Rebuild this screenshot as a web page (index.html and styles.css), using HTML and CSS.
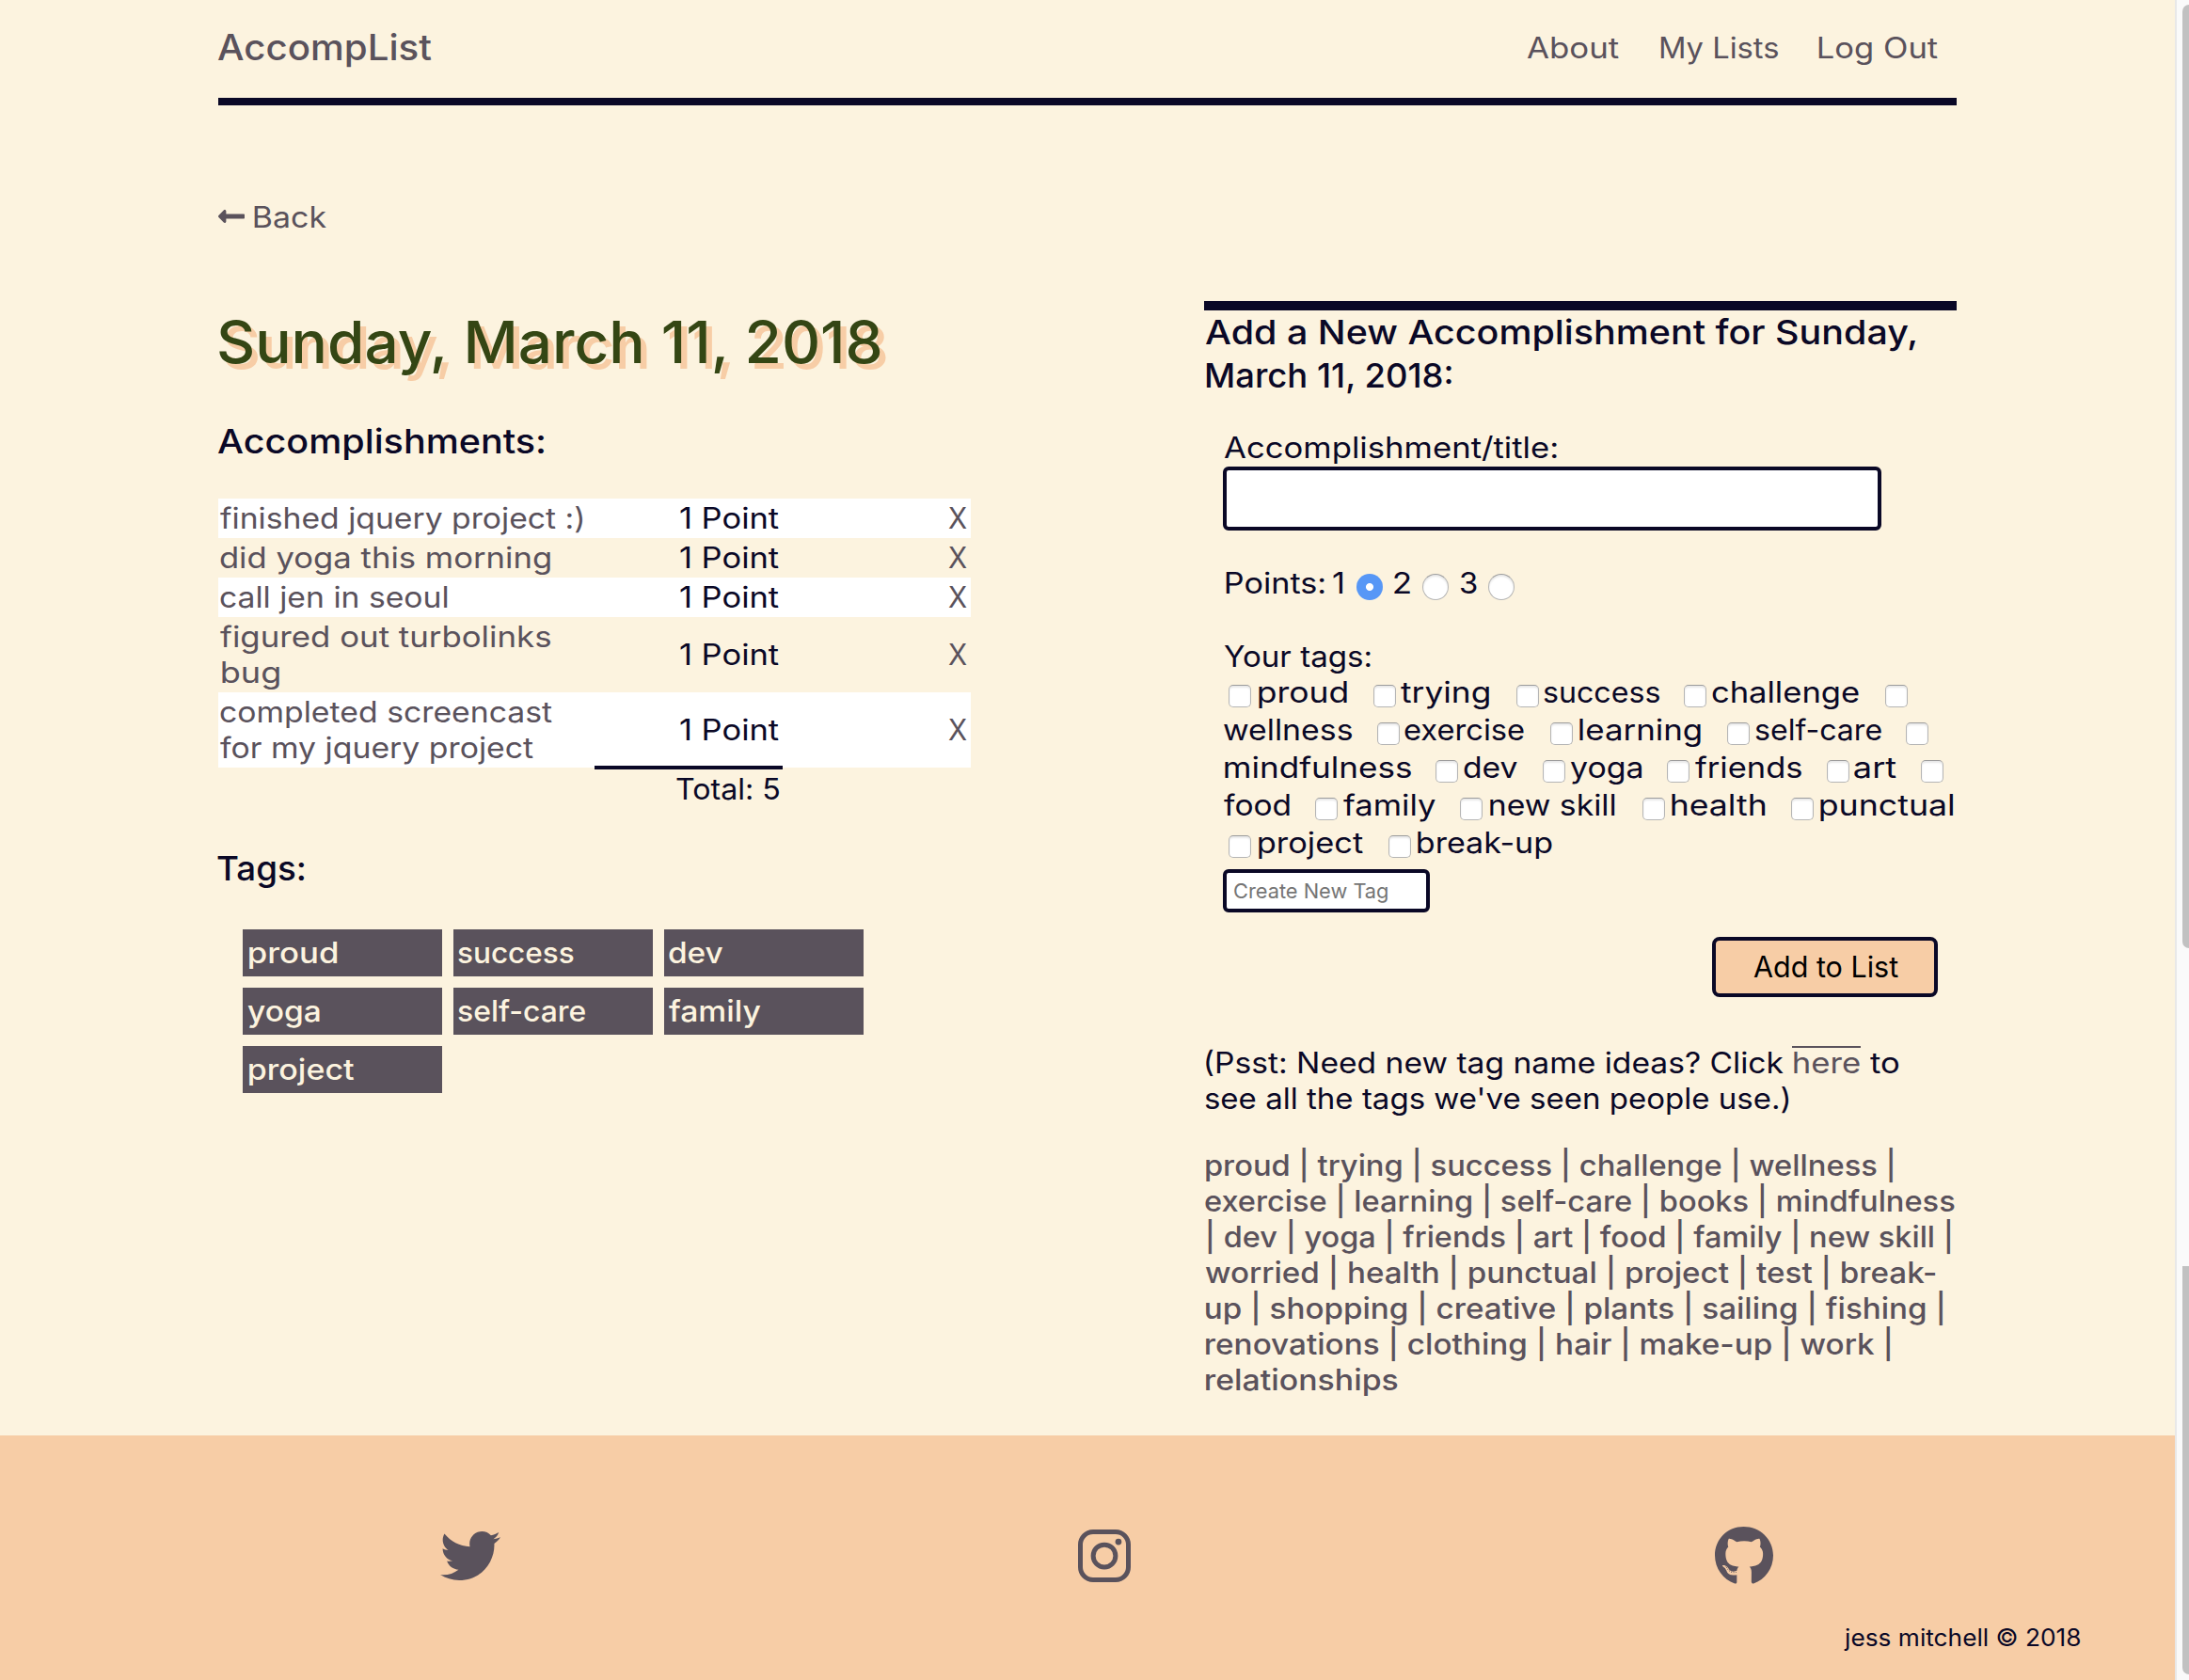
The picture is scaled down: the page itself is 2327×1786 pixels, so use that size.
FILE: index.html
```html
<!DOCTYPE html>
<html lang="en">
<head>
<meta charset="utf-8">
<title>AccompList</title>
<link rel="stylesheet" href="styles.css">
</head>
<body>
<div class="page">
  <div class="content">
    <header class="header">
      <a class="brand" data-x="-1" data-w="228">AccompList</a>
      <nav class="nav">
        <a data-w="98">About</a>
        <a data-x="1" data-w="125">My Lists</a>
        <a data-x="1" data-w="127">Log Out</a>
      </nav>
    </header>
    <a class="back">
      <svg class="back-icon" viewBox="0 0 448 512"><path d="M134.059 296H436c6.627 0 12-5.373 12-12v-56c0-6.627-5.373-12-12-12H134.059v-46.059c0-21.382-25.851-32.09-40.971-16.971L7.029 239.029c-9.373 9.373-9.373 24.569 0 33.941l86.059 86.059c15.119 15.119 40.971 4.411 40.971-16.971V296z"/></svg>
      <span data-x="10" data-w="77">Back</span>
    </a>
    <main class="columns">
      <section class="day">
        <h1 data-x="1" data-w="704">Sunday, March 11, 2018</h1>
        <h2 class="list-title" data-x="-1" data-w="348">Accomplishments:</h2>
        <div class="list">
          <div class="row"><a><span data-x="2" data-w="385">finished jquery project :)</span></a><span data-x="91" data-w="105">1 Point</span><a data-x="176" data-w="20">X</a></div>
          <div class="row"><a><span data-x="2" data-w="351">did yoga this morning</span></a><span data-x="91" data-w="105">1 Point</span><a data-x="176" data-w="20">X</a></div>
          <div class="row"><a><span data-x="2" data-w="242">call jen in seoul</span></a><span data-x="91" data-w="105">1 Point</span><a data-x="176" data-w="20">X</a></div>
          <div class="row"><a><span data-x="2" data-w="351">figured out turbolinks</span><span data-x="4" data-w="61">bug</span></a><span data-x="91" data-w="105">1 Point</span><a data-x="176" data-w="20">X</a></div>
          <div class="row"><a><span data-x="2" data-w="353">completed screencast</span><span data-x="2" data-w="333">for my jquery project</span></a><span data-x="91" data-w="105">1 Point</span><a data-x="176" data-w="20">X</a></div>
        </div>
        <div class="total"><span data-x="87" data-w="109">Total: 5</span></div>
        <h2 class="tags-title" data-x="-1" data-w="93">Tags:</h2>
        <div class="chips">
          <a><span data-x="7" data-w="93">proud</span></a>
          <a><span data-x="5" data-w="123">success</span></a>
          <a><span data-x="5" data-w="58">dev</span></a>
          <a><span data-x="5" data-w="77">yoga</span></a>
          <a><span data-x="5" data-w="135">self-care</span></a>
          <a><span data-x="5" data-w="98">family</span></a>
          <a><span data-x="7" data-w="111">project</span></a>
        </div>
      </section>
      <section class="add">
        <h2><span data-x="1" data-w="755">Add a New Accomplishment for Sunday,</span><span data-x="2" data-w="262">March 11, 2018:</span></h2>
        <form class="form">
          <label class="title-label" data-x="1" data-w="354">Accomplishment/title:</label>
          <input class="title-input" type="text">
          <div class="points">
            <span class="points-label" data-x="3" data-w="105">Points:</span>
            <span class="num" data-x="3" data-w="10">1</span><input type="radio" name="points" checked>
            <span class="num" data-x="0" data-w="17">2</span><input type="radio" name="points">
            <span class="num" data-x="0" data-w="18">3</span><input type="radio" name="points">
          </div>
          <div class="your-tags" data-x="1" data-w="156">Your tags:</div>
          <div class="tag-row"><label style="width:154px"><input type="checkbox"><b data-x="8" data-w="94">proud</b></label><label style="width:152px"><input type="checkbox"><b data-x="5" data-w="94">trying</b></label><label style="width:178px"><input type="checkbox"><b data-x="5" data-w="123">success</b></label><label style="width:214px"><input type="checkbox"><b data-x="6" data-w="156">challenge</b></label><input type="checkbox"></div>
          <div class="tag-row"><label class="wrapped" style="width:164px"><b data-x="1" data-w="136">wellness</b></label><label style="width:184px"><input type="checkbox"><b data-x="5" data-w="127">exercise</b></label><label style="width:188px"><input type="checkbox"><b data-x="7" data-w="129">learning</b></label><label style="width:190px"><input type="checkbox"><b data-x="6" data-w="134">self-care</b></label><input type="checkbox"></div>
          <div class="tag-row"><label class="wrapped" style="width:226px"><b data-x="2" data-w="198">mindfulness</b></label><label style="width:114px"><input type="checkbox"><b data-x="6" data-w="57">dev</b></label><label style="width:132px"><input type="checkbox"><b data-x="5" data-w="77">yoga</b></label><label style="width:170px"><input type="checkbox"><b data-x="6" data-w="113">friends</b></label><label style="width:100px"><input type="checkbox"><b data-x="5" data-w="45">art</b></label><input type="checkbox"></div>
          <div class="tag-row"><label class="wrapped" style="width:98px"><b data-x="1" data-w="70">food</b></label><label style="width:154px"><input type="checkbox"><b data-x="6" data-w="98">family</b></label><label style="width:194px"><input type="checkbox"><b data-x="8" data-w="133">new skill</b></label><label style="width:158px"><input type="checkbox"><b data-x="7" data-w="99">health</b></label><label><input type="checkbox"><b data-x="7" data-w="142">punctual</b></label></div>
          <div class="tag-row"><label style="width:170px"><input type="checkbox"><b data-x="8" data-w="111">project</b></label><label><input type="checkbox"><b data-x="7" data-w="143">break-up</b></label></div>
          <input class="new-tag" type="text" placeholder="Create New Tag">
          <button class="submit" type="button"><span data-x="40" data-w="154">Add to List</span></button>
        </form>
        <div class="hint">
          <p><span class="ask"><span data-x="2" data-w="614">(Psst: Need new tag name ideas? Click</span></span><a class="here"><span data-x="2" data-w="70">here</span></a><span data-x="0" data-w="30">to</span></p>
          <p><span data-x="1" data-w="620">see all the tags we've seen people use.)</span></p>
        </div>
        <div class="all-tags">
          <span data-x="2" data-w="730">proud | trying | success | challenge | wellness |</span>
          <span data-x="1" data-w="797">exercise | learning | self-care | books | mindfulness</span>
          <span data-x="4" data-w="789">| dev | yoga | friends | art | food | family | new skill |</span>
          <span data-x="1" data-w="777">worried | health | punctual | project | test | break-</span>
          <span data-x="2" data-w="783">up | shopping | creative | plants | sailing | fishing |</span>
          <span data-x="2" data-w="727">renovations | clothing | hair | make-up | work |</span>
          <span data-x="2" data-w="204">relationships</span>
        </div>
      </section>
    </main>
  </div>
  <footer class="footer">
    <div class="social">
      <svg width="64" height="64" viewBox="0 0 512 512"><path d="M459.37 151.716c.325 4.548.325 9.097.325 13.645 0 138.72-105.583 298.558-298.558 298.558-59.452 0-114.68-17.219-161.137-47.106 8.447.974 16.568 1.299 25.34 1.299 49.055 0 94.213-16.568 130.274-44.832-46.132-.975-84.792-31.188-98.112-72.772 6.498.974 12.995 1.624 19.818 1.624 9.421 0 18.843-1.3 27.614-3.573-48.081-9.747-84.143-51.98-84.143-102.985v-1.299c13.969 7.797 30.214 12.67 47.431 13.319-28.264-18.843-46.781-51.005-46.781-87.391 0-19.492 5.197-37.36 14.294-52.954 51.655 63.675 129.3 105.258 216.365 109.807-1.624-7.797-2.599-15.918-2.599-24.04 0-57.828 46.782-104.934 104.934-104.934 30.213 0 57.502 12.67 76.67 33.137 23.715-4.548 46.456-13.32 66.599-25.34-7.798 24.366-24.366 44.833-46.132 57.827 21.117-2.273 41.584-8.122 60.426-16.243-14.292 20.791-32.161 39.308-52.628 54.253z"/></svg>
      <svg width="56" height="64" viewBox="0 0 448 512"><rect class="line" x="20" y="52" width="408" height="408" rx="108"/><circle class="line" cx="224" cy="256" r="95"/><circle cx="343.600" cy="136.400" r="27"/></svg>
      <svg width="62" height="64" viewBox="0 0 496 512"><path d="M165.9 397.4c0 2-2.3 3.6-5.2 3.6-3.3.3-5.6-1.3-5.6-3.6 0-2 2.3-3.6 5.2-3.6 3-.3 5.6 1.3 5.6 3.6zm-31.1-4.5c-.7 2 1.3 4.3 4.3 4.9 2.6 1 5.6 0 6.2-2s-1.3-4.3-4.3-5.2c-2.6-.7-5.5.3-6.2 2.3zm44.2-1.7c-2.900.7-4.900 2.600-4.600 4.900.3 2 2.900 3.300 5.900 2.600 2.900-.7 4.900-2.600 4.600-4.600-.3-1.900-3-3.200-5.900-2.900zM244.800 8C106.100 8 0 113.300 0 252c0 110.900 69.800 205.800 169.500 239.200 12.800 2.300 17.300-5.600 17.300-12.100 0-6.200-.3-40.400-.3-61.400 0 0-70 15-84.700-29.800 0 0-11.400-29.100-27.800-36.600 0 0-22.900-15.700 1.600-15.400 0 0 24.900 2 38.600 25.800 21.900 38.600 58.600 27.500 72.900 20.900 2.300-16 8.800-27.100 16-33.700-55.900-6.200-112.300-14.300-112.300-110.500 0-27.500 7.600-41.300 23.600-58.900-2.600-6.500-11.100-33.300 2.600-67.900 20.900-6.500 69 27 69 27 20-5.600 41.500-8.500 62.800-8.500s42.800 2.900 62.800 8.500c0 0 48.100-33.600 69-27 13.700 34.700 5.200 61.400 2.600 67.900 16 17.700 25.800 31.500 25.800 58.900 0 96.500-58.900 104.200-114.800 110.500 9.200 7.900 17 22.900 17 46.400 0 33.700-.3 75.400-.3 83.600 0 6.500 4.600 14.400 17.300 12.100C428.200 457.800 496 362.900 496 252 496 113.300 383.500 8 244.800 8zM97.200 352.900c-1.300 1-1 3.300.7 5.200 1.600 1.600 3.900 2.300 5.200 1 1.300-1 1-3.300-.7-5.200-1.600-1.600-3.900-2.300-5.200-1zm-10.800-8.100c-.7 1.300.3 2.900 2.300 3.900 1.600 1 3.600.7 4.300-.7.7-1.300-.3-2.900-2.300-3.900-2-.6-3.600-.3-4.300.7zm32.400 35.600c-1.600 1.300-1 4.300 1.300 6.200 2.300 2.300 5.200 2.600 6.500 1 1.300-1.300.7-4.300-1.300-6.200-2.200-2.300-5.200-2.600-6.500-1zm-11.400-14.700c-1.600 1-1.600 3.600 0 5.900 1.600 2.300 4.300 3.300 5.600 2.300 1.600-1.300 1.600-3.900 0-6.200-1.400-2.300-4-3.300-5.600-2z"/></svg>
    </div>
    <div class="copyright" data-x="1960" data-w="251">jess mitchell © 2018</div>
  </footer>
</div>
<div class="scrollbar"><div class="thumb first"></div><div class="thumb second"></div></div>
<script>
// Widens each label so its glyphs span data-w pixels, starting data-x pixels in.
const ctx = document.createElement("canvas").getContext("2d");

function widen(el) {
  const style = getComputedStyle(el);
  ctx.font = style.fontWeight + " " + style.fontSize + " " + style.fontFamily;
  const m = ctx.measureText(el.textContent);
  const scale = el.dataset.w / (m.actualBoundingBoxRight + m.actualBoundingBoxLeft);
  const shift = Number(el.dataset.x || 0) + m.actualBoundingBoxLeft * scale;
  el.style.transform = "translateX(" + shift + "px) scaleX(" + scale + ")";
}

document.querySelectorAll("[data-w]").forEach(widen);
</script>
</body>
</html>
```
FILE: styles.css
```css
* { box-sizing: border-box; }
body {
  margin: 0;
  width: 2327px;
  height: 1786px;
  overflow: hidden;
  display: flex;
  background: #fcf3df;
  color: #0a0826;
  font-family: Inter, "Liberation Sans", sans-serif;
  font-size: 31px;
  line-height: 38px;
  font-kerning: normal;
}
h1, h2, p { margin: 0; }
a, b { color: inherit; font-weight: inherit; }
[data-w] { display: block; white-space: nowrap; transform-origin: 0 50%; }
.page { width: 2312px; height: 1786px; flex: none; }
.content { height: 1526px; width: 1848px; margin-left: 232px; }

.header {
  display: flex;
  justify-content: space-between;
  height: 112px;
  border-bottom: 8px solid #0a0826;
  line-height: 101px;
  color: #5a525c;
}
.brand { font-size: 38px; font-weight: 500; }
.nav { display: grid; grid-template-columns: 141px 168px 148px; }
.back { display: flex; margin-top: 100px; height: 38px; color: #5a525c; }
.back-icon { width: 28px; height: 32px; margin-top: 2px; fill: #5a525c; }

.columns { display: grid; grid-template-columns: 800px 800px; column-gap: 248px; margin-top: 70px; }
h1 {
  padding-top: 5px;
  font-size: 62px;
  font-weight: 500;
  line-height: 78px;
  color: #344614;
  text-shadow: 6px 6px 0 #f7cda6;
}
h2 { font-size: 36px; font-weight: 500; line-height: 46px; }
.list-title { margin-top: 43px; }
.list { margin-top: 38px; }
.row {
  display: grid;
  grid-template-columns: 400px 200px 200px;
  align-items: center;
  padding: 2px 0;
}
.row:nth-child(odd) { background: #fff; }
.row a { color: #5a525c; }
.total {
  position: relative;
  width: 200px;
  margin: -2px 0 0 400px;
  padding-top: 2px;
  border-top: 4px solid #0a0826;
}
.tags-title { margin-top: 42px; }
.chips {
  display: grid;
  grid-template-columns: repeat(3, 212px);
  gap: 12px;
  margin: 42px 0 0 26px;
}
.chips a { height: 50px; line-height: 50px; background: #5a525c; color: #fcf3df; font-weight: 500; }

.add { border-top: 10px solid #0a0826; }
.form { margin: 35px 0 0 20px; width: 780px; }
.title-input, .new-tag {
  display: block;
  border: 4px solid #0a0826;
  border-radius: 6px;
  background: #fff;
  outline: none;
}
.title-input { width: 700px; height: 68px; margin-top: 1px; }
.points { display: flex; margin-top: 37px; height: 38px; }
.points-label { width: 114px; }
.num { width: 28px; }
.points input + .num { margin-left: 12px; width: 30px; }
.points-label + .num { width: 28px; }
input[type="radio"], input[type="checkbox"] {
  appearance: none;
  flex: none;
  margin: 0;
  border: 1px solid #b5b5b5;
  border-top-color: #9c9c9c;
  background: #fff;
  box-shadow: inset 0 2px 2px #e8e8e8;
}
input[type="radio"] { width: 28px; height: 28px; margin-top: 9px; border-radius: 50%; }
input[type="radio"]:checked {
  border: 0;
  background: radial-gradient(circle, #fff 3.6px, #5797f6 4.4px);
  box-shadow: none;
}
.your-tags { margin-top: 40px; }
.tag-row { display: flex; height: 40px; line-height: 40px; padding-left: 6px; }
.your-tags + .tag-row { margin-top: -1px; }
.tag-row label { display: flex; flex: none; }
.tag-row .wrapped { margin-left: -6px; }
input[type="checkbox"] { width: 24px; height: 24px; margin-top: 12px; border-radius: 5px; }
.new-tag {
  width: 220px;
  height: 46px;
  margin-top: 8px;
  padding: 0 0 0 7px;
  font: 21.8px/38px Inter, "Liberation Sans", sans-serif;
  color: #757575;
}
.new-tag::placeholder { color: #757575; }
.submit {
  display: block;
  width: 240px;
  height: 64px;
  margin: 26px 0 0 520px;
  padding: 0;
  border: 4px solid #0a0826;
  border-radius: 8px;
  background: #f7cda6;
  color: #000;
  font: 31px/56px Inter, "Liberation Sans", sans-serif;
  text-align: left;
}
.hint { margin-top: 51px; }
.hint p { display: flex; height: 38px; }
.ask { width: 625px; }
.here { position: relative; width: 83px; color: #5a525c; }
.here::before {
  content: "";
  position: absolute;
  top: 1px;
  left: 0;
  width: 73px;
  height: 2px;
  background: #5a525c;
}
.all-tags { margin-top: 33px; color: #5a525c; font-weight: 500; }

.footer { height: 260px; background: #f7cda6; padding-top: 96px; }
.social { display: grid; grid-template-columns: 678px 677px 62px; margin-left: 468px; height: 64px; }
.social svg { display: block; fill: #5a525c; }
.social .line { fill: none; stroke: #5a525c; stroke-width: 40; }
.copyright { margin-top: 40px; font-size: 25px; line-height: 30px; }

.scrollbar {
  width: 15px;
  height: 1786px;
  padding-left: 6px;
  border-left: 2px solid #e8e8e8;
  background: #fafafa;
  overflow: hidden;
}
.thumb { width: 14px; background: #c1c1c1; }
.first { height: 1003px; margin-top: 5px; border-radius: 7px; }
.second { height: 434px; margin-top: 338px; border-radius: 0 0 7px 7px; }
```
